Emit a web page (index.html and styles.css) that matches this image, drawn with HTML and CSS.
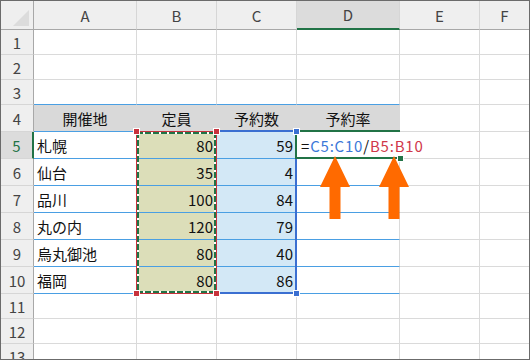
FILE: index.html
```html
<!DOCTYPE html>
<html lang="ja">

<head>
    <meta charset="UTF-8">
    <meta name="viewport" content="width=device-width, initial-scale=1.0">
    <title>予約率</title>
    <link rel="stylesheet" href="styles.css">
</head>

<body>

    <div class="sheet">
        <div class="grid">
            <!-- 列見出し -->
            <div class="corner">
                <svg width="32" height="28" viewBox="0 0 32 28"><polygon points="12,25 28,9 28,25" fill="#dcdcdc"/></svg>
            </div>
            <div class="cell col-h">A</div>
            <div class="cell col-h">B</div>
            <div class="cell col-h">C</div>
            <div class="cell col-h sel">D</div>
            <div class="cell col-h">E</div>
            <div class="cell col-h last">F</div>

            <div class="cell row-h">1</div>
            <div class="cell"></div><div class="cell"></div><div class="cell"></div><div class="cell"></div><div class="cell"></div><div class="cell last"></div>

            <div class="cell row-h">2</div>
            <div class="cell"></div><div class="cell"></div><div class="cell"></div><div class="cell"></div><div class="cell"></div><div class="cell last"></div>

            <div class="cell row-h">3</div>
            <div class="cell tb"></div><div class="cell tb"></div><div class="cell tb"></div><div class="cell tb"></div><div class="cell"></div><div class="cell last"></div>

            <!-- 表 -->
            <div class="cell row-h">4</div>
            <div class="cell th">開催地</div>
            <div class="cell th">定員</div>
            <div class="cell th">予約数</div>
            <div class="cell th">予約率</div>
            <div class="cell"></div><div class="cell last"></div>

            <div class="cell row-h sel">5</div>
            <div class="cell tb">札幌</div>
            <div class="cell tb b">80</div>
            <div class="cell tb c">59</div>
            <div class="cell tb fx">=<span class="ref-blue">C5:C10</span>/<span class="ref-red">B5:B10</span><span class="caret"></span></div>
            <div class="cell"></div><div class="cell last"></div>

            <div class="cell row-h">6</div>
            <div class="cell tb">仙台</div>
            <div class="cell tb b">35</div>
            <div class="cell tb c">4</div>
            <div class="cell tb"></div>
            <div class="cell"></div><div class="cell last"></div>

            <div class="cell row-h">7</div>
            <div class="cell tb">品川</div>
            <div class="cell tb b">100</div>
            <div class="cell tb c">84</div>
            <div class="cell tb"></div>
            <div class="cell"></div><div class="cell last"></div>

            <div class="cell row-h">8</div>
            <div class="cell tb">丸の内</div>
            <div class="cell tb b">120</div>
            <div class="cell tb c">79</div>
            <div class="cell tb"></div>
            <div class="cell"></div><div class="cell last"></div>

            <div class="cell row-h">9</div>
            <div class="cell tb">烏丸御池</div>
            <div class="cell tb b">80</div>
            <div class="cell tb c">40</div>
            <div class="cell tb"></div>
            <div class="cell"></div><div class="cell last"></div>

            <div class="cell row-h">10</div>
            <div class="cell tb">福岡</div>
            <div class="cell tb b">80</div>
            <div class="cell tb c">86</div>
            <div class="cell tb"></div>
            <div class="cell"></div><div class="cell last"></div>

            <div class="cell row-h">11</div>
            <div class="cell"></div><div class="cell"></div><div class="cell"></div><div class="cell"></div><div class="cell"></div><div class="cell last"></div>

            <div class="cell row-h">12</div>
            <div class="cell"></div><div class="cell"></div><div class="cell"></div><div class="cell"></div><div class="cell"></div><div class="cell last"></div>

            <div class="cell row-h">13</div>
            <div class="cell"></div><div class="cell"></div><div class="cell"></div><div class="cell"></div><div class="cell"></div><div class="cell last"></div>
        </div>

        <!-- 参照範囲の枠 -->
        <div class="range-c"></div>
        <div class="range-b"><div class="ants"></div></div>
        <div class="active"></div>

        <div class="handle red h-b1"></div>
        <div class="handle red h-b2"></div>
        <div class="handle red h-b3"></div>
        <div class="handle red h-b4"></div>
        <div class="handle blue h-c1"></div>
        <div class="handle blue h-c2"></div>
        <div class="handle green h-fill"></div>

        <!-- 矢印 -->
        <svg class="arrow arrow-1" width="30" height="63" viewBox="0 0 30 63"><polygon points="15,0 30,31 20.5,31 20.5,63 9.5,63 9.5,31 0,31" fill="#ff6a00"/></svg>
        <svg class="arrow arrow-2" width="30" height="63" viewBox="0 0 30 63"><polygon points="15,0 30,31 20.5,31 20.5,63 9.5,63 9.5,31 0,31" fill="#ff6a00"/></svg>
    </div>

</body>

</html>
```

FILE: styles.css
```css
body {
    margin: 0;
    font-family: "Noto Sans CJK JP", "Noto Sans", sans-serif;
}

.sheet {
    position: relative;
    width: 530px;
    height: 360px;
    border: 1px solid #6b6b6b;
    box-sizing: border-box;
    overflow: hidden;
    background: #fff;
}

.grid {
    display: grid;
    grid-template-columns: 33px 103px 80px 80px 103px 80px 1fr;
    grid-template-rows: 29px 25px 25px 25px 27px 27px 27px 27px 27px 27px 27px 25px 25px 25px;
}

.cell {
    box-sizing: border-box;
    display: flex;
    align-items: center;
    min-width: 0;
    padding: 0 3px;
    border-right: 1px solid #dadada;
    border-bottom: 1px solid #dadada;
    font-size: 15px;
    line-height: 1;
    color: #111;
    white-space: nowrap;
}

.cell.last {
    border-right: none;
}

.corner {
    background: #efefef;
    border-right: 1px solid #a8a8a8;
    border-bottom: 1px solid #a8a8a8;
}

.corner svg {
    display: block;
}

.col-h {
    justify-content: center;
    background: #efefef;
    border-right-color: #d6d6d6;
    border-bottom-color: #a8a8a8;
    color: #444;
}

.col-h.sel {
    background: #dcdcdc;
    border-bottom: 2px solid #217346;
}

.row-h {
    justify-content: center;
    background: #efefef;
    border-right-color: #a8a8a8;
    border-bottom-color: #d6d6d6;
    color: #444;
}

.row-h.sel {
    background: #dcdcdc;
    border-right: 2px solid #217346;
    color: #217346;
}

.tb {
    border-bottom-color: #4a9fe3;
}

.th {
    justify-content: center;
    background: #d9d9d9;
    border-right-color: #d9d9d9;
    border-bottom-color: #4a9fe3;
}

.b {
    justify-content: flex-end;
    background: #dcdeb9;
}

.c {
    justify-content: flex-end;
    background: #d3e8f6;
}

.fx {
    overflow: visible;
    padding-left: 4px;
    letter-spacing: 0.8px;
    border-right-color: transparent;
}

.ref-blue {
    color: #3c78d8;
}

.ref-red {
    color: #d0384a;
}

.caret {
    display: inline-block;
    width: 1px;
    height: 23px;
    margin-left: 1px;
    background: #000;
}

/* 参照範囲 */
.range-b {
    position: absolute;
    left: 135px;
    top: 130px;
    width: 81px;
    height: 163px;
    box-sizing: border-box;
    border: 1px solid #c8323c;
}

.ants {
    height: 100%;
    background:
        repeating-linear-gradient(90deg, #217346 0 6px, #fff 6px 8px) top left / 100% 2px no-repeat,
        repeating-linear-gradient(90deg, #217346 0 6px, #fff 6px 8px) bottom left / 100% 2px no-repeat,
        repeating-linear-gradient(180deg, #217346 0 6px, #fff 6px 8px) top left / 2px 100% no-repeat,
        repeating-linear-gradient(180deg, #217346 0 6px, #fff 6px 8px) top right / 2px 100% no-repeat;
}

.range-c {
    position: absolute;
    left: 215px;
    top: 129px;
    width: 81px;
    height: 164px;
    box-sizing: border-box;
    border: 2px solid #3b6fd1;
    border-left: none;
}

.active {
    position: absolute;
    left: 294px;
    top: 129px;
    width: 105px;
    height: 29px;
    box-sizing: border-box;
    border: 2px solid #217346;
    border-right: none;
}

.handle {
    position: absolute;
    width: 7px;
    height: 7px;
    box-sizing: border-box;
    border: 1px solid #fff;
}

.handle.red {
    background: #c8323c;
}

.handle.blue {
    background: #3b6fd1;
}

.handle.green {
    background: #217346;
}

.h-b1 { left: 132px; top: 127px; }
.h-b2 { left: 212px; top: 127px; }
.h-b3 { left: 132px; top: 289px; }
.h-b4 { left: 212px; top: 289px; }
.h-c1 { left: 292px; top: 127px; }
.h-c2 { left: 292px; top: 289px; }
.h-fill { left: 396px; top: 154px; }

.arrow {
    position: absolute;
    top: 155px;
}

.arrow-1 {
    left: 319px;
}

.arrow-2 {
    left: 378px;
}
```
